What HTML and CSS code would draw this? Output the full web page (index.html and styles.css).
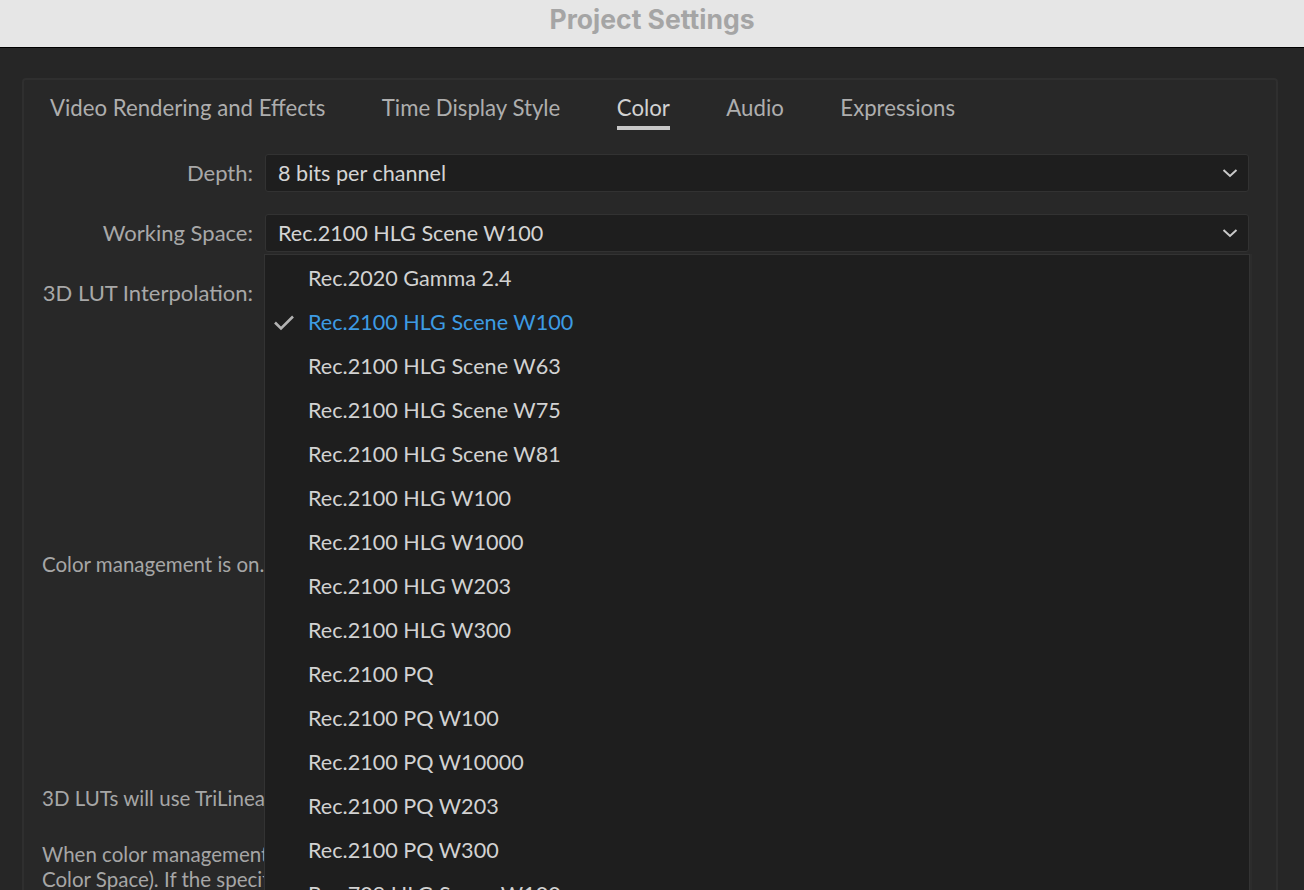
FILE: index.html
```html
<!DOCTYPE html>
<html>
<head>
<meta charset="utf-8">
<link rel="stylesheet" href="styles.css">
</head>
<body>
<div class="titlebar"><span class="title">Project Settings</span></div>
<div class="main">
  <div class="panel">
    <div class="tabs">
      <div class="tab">Video Rendering and Effects</div>
      <div class="tab">Time Display Style</div>
      <div class="tab active">Color</div>
      <div class="tab">Audio</div>
      <div class="tab">Expressions</div>
    </div>
    <div class="form">
      <div class="label">Depth:</div>
      <div class="select"><span>8 bits per channel</span>
        <svg class="chev" width="16" height="10" viewBox="0 0 16 10"><polyline points="1.5,2 8,8 14.5,2" fill="none" stroke="#c9c9c9" stroke-width="2"/></svg>
      </div>
      <div class="label">Working Space:</div>
      <div class="select"><span>Rec.2100 HLG Scene W100</span>
        <svg class="chev" width="16" height="10" viewBox="0 0 16 10"><polyline points="1.5,2 8,8 14.5,2" fill="none" stroke="#c9c9c9" stroke-width="2"/></svg>
      </div>
      <div class="label">3D LUT Interpolation:</div>
      <div class="select"><span>TriLinear</span></div>
    </div>
    <p class="info first">Color management is on. Colors are converted to the working space for compositing.</p>
    <p class="info second">3D LUTs will use TriLinear interpolation when applying color transforms.</p>
    <p class="info third">When color management is on, footage is interpreted using its embedded profile (Media<br>Color Space). If the specified profile is not found, the working space is used.</p>

    <div class="menu">
      <div class="item">Rec.2020 Gamma 2.4</div>
      <div class="item selected"><svg class="check" width="20" height="16" viewBox="0 0 20 16"><polyline points="1,7.5 7,13.5 19,1.5" fill="none" stroke="#b3b3b3" stroke-width="2.6"/></svg>Rec.2100 HLG Scene W100</div>
      <div class="item">Rec.2100 HLG Scene W63</div>
      <div class="item">Rec.2100 HLG Scene W75</div>
      <div class="item">Rec.2100 HLG Scene W81</div>
      <div class="item">Rec.2100 HLG W100</div>
      <div class="item">Rec.2100 HLG W1000</div>
      <div class="item">Rec.2100 HLG W203</div>
      <div class="item">Rec.2100 HLG W300</div>
      <div class="item">Rec.2100 PQ</div>
      <div class="item">Rec.2100 PQ W100</div>
      <div class="item">Rec.2100 PQ W10000</div>
      <div class="item">Rec.2100 PQ W203</div>
      <div class="item">Rec.2100 PQ W300</div>
      <div class="item">Rec.709 HLG Scene W100</div>
    </div>
  </div>
</div>
</body>
</html>
```

FILE: styles.css
```css
html, body {
  margin: 0;
  padding: 0;
}
body {
  width: 1304px;
  height: 890px;
  overflow: hidden;
  background: #262626;
  font-family: "Lato", "Open Sans", sans-serif;
}
.titlebar {
  height: 47px;
  background: #e6e6e6;
  border-bottom: 1px solid #000;
  display: flex;
  justify-content: center;
  align-items: center;
}
.title {
  font-family: "Inter", "Roboto", sans-serif;
  font-weight: 700;
  font-size: 26.5px;
  color: #a5a5a5;
  margin-top: -9px;
}
.main {
  padding: 30px 26px 0 22px;
}
.panel {
  position: relative;
  height: 900px;
  background: #282828;
  border: 2px solid #2f2f2f;
  border-radius: 4px;
}
.tabs {
  display: flex;
  gap: 56.5px;
  padding: 14px 0 0 26px;
}
.tab {
  font-size: 22.2px;
  line-height: 28px;
  color: #aeaeae;
  padding-bottom: 8px;
}
.tab.active {
  color: #d2d2d2;
  box-shadow: inset 0 -4px 0 #c8c8c8;
}
.form {
  display: grid;
  grid-template-columns: 229px 1fr;
  column-gap: 12px;
  row-gap: 22px;
  margin: 24px 27px 0 0;
}
.label {
  text-align: right;
  font-size: 22px;
  color: #a8a8a8;
  line-height: 38px;
}
.select {
  height: 36px;
  background: #1e1e1e;
  border: 1px solid #323232;
  border-radius: 3px;
  display: flex;
  align-items: center;
  justify-content: space-between;
  padding: 0 10px 0 12px;
  font-size: 21.6px;
  color: #d4d4d4;
}
.chev {
  display: block;
}
.info {
  margin: 0;
  padding-left: 18px;
  width: 1180px;
  white-space: nowrap;
  overflow: hidden;
  font-size: 20.5px;
  line-height: 25px;
  color: #a6a6a6;
}
.info.first { margin-top: 240px; }
.info.second { margin-top: 209px; }
.info.third { margin-top: 31px; }
.menu {
  position: absolute;
  left: 240px;
  top: 174px;
  width: 984px;
  height: 700px;
  background: #1e1e1e;
  border: 1px solid #333;
  box-shadow: 2px 0 0 #2c2c2c;
  padding-top: 1px;
}
.item {
  position: relative;
  height: 44px;
  line-height: 44px;
  padding-left: 43px;
  font-size: 21.6px;
  color: #d2d2d2;
  white-space: nowrap;
}
.item.selected {
  color: #3d9be3;
}
.check {
  position: absolute;
  left: 9px;
  top: 15px;
}
```
